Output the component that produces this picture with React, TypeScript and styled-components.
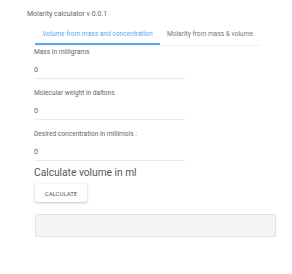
import styled, { createGlobalStyle } from "styled-components";

const GlobalStyle = createGlobalStyle`
  html, body {
    margin: 0;
    padding: 0;
    background: #ffffff;
  }

  body {
    font-family: Roboto, "Liberation Sans", sans-serif;
  }
`;

const fields = [
  "Mass in milligrams",
  "Molecular weight in daltons",
  "Desired concentration in millimols :",
];

export default function App() {
  return (
    <>
      <GlobalStyle />
      <Page>
        <Title>Molarity calculator v 0.0.1</Title>

        <TabRow>
          <Tab $active>Volume from mass and concentration</Tab>
          <Tab>Molarity from mass &amp; volume</Tab>
        </TabRow>

        <Form>
          {fields.map((label) => (
            <Field key={label}>
              <FieldLabel>{label}</FieldLabel>
              <FieldInput defaultValue="0" />
            </Field>
          ))}
        </Form>

        <Heading>Calculate volume in ml</Heading>
        <CalcButton>CALCULATE</CalcButton>
        <Output />
      </Page>
    </>
  );
}

const Page = styled.div`
  display: flex;
  flex-direction: column;
  align-items: flex-start;

  width: 292px;
  height: 274px;
  box-sizing: border-box;
  padding: 9px 0 0 27px;
`;

const Title = styled.div`
  height: 10px;

  font-size: 7px;
  line-height: 10px;

  color: #666666;
`;

const TabRow = styled.div`
  display: flex;
  flex-direction: row;

  width: 225px;
  margin-top: 6px;
  margin-left: 8px;

  border-bottom: 1px solid #efefef;
`;

const Tab = styled.div<{ $active?: boolean }>`
  display: flex;
  align-items: center;
  justify-content: center;

  flex: ${(p) => (p.$active ? "0 0 125px" : "1 1 auto")};
  height: 18px;

  font-size: 6.6px;
  white-space: nowrap;

  color: ${(p) => (p.$active ? "#55a8f6" : "#777777")};
  border-bottom: 2px solid ${(p) => (p.$active ? "#55a8f6" : "transparent")};
`;

const Form = styled.div`
  display: flex;
  flex-direction: column;
  gap: 10px;

  margin-top: 2px;
  margin-left: 7px;
`;

const Field = styled.div`
  display: flex;
  flex-direction: column;
  gap: 4px;
`;

const FieldLabel = styled.div`
  height: 8px;

  font-size: 6.6px;
  line-height: 8px;

  color: #666666;
`;

const FieldInput = styled.input`
  width: 151px;
  height: 18px;
  box-sizing: content-box;
  padding: 0;

  font-family: Roboto, "Liberation Sans", sans-serif;
  font-size: 7.5px;

  color: #666666;
  background: transparent;
  border: none;
  border-bottom: 1px solid #eaeaea;
  outline: none;
`;

const Heading = styled.div`
  height: 14px;
  margin-top: 5px;
  margin-left: 7px;

  font-size: 10.2px;
  line-height: 14px;

  color: #555555;
`;

const CalcButton = styled.button`
  width: 52px;
  height: 18px;
  margin-top: 4px;
  margin-left: 8px;
  padding: 0;

  font-family: Roboto, "Liberation Sans", sans-serif;
  font-size: 6px;

  color: #555555;
  background: #ffffff;
  border: none;
  border-radius: 2px;
  box-shadow: 0 1px 3px rgba(0, 0, 0, 0.22), 0 0 1px rgba(0, 0, 0, 0.12);
`;

const Output = styled.div`
  width: 239px;
  height: 21px;
  margin-top: 12px;
  margin-left: 8px;

  background: #f4f4f4;
  border: 1px solid #e2e2e2;
  border-radius: 2px;
`;
